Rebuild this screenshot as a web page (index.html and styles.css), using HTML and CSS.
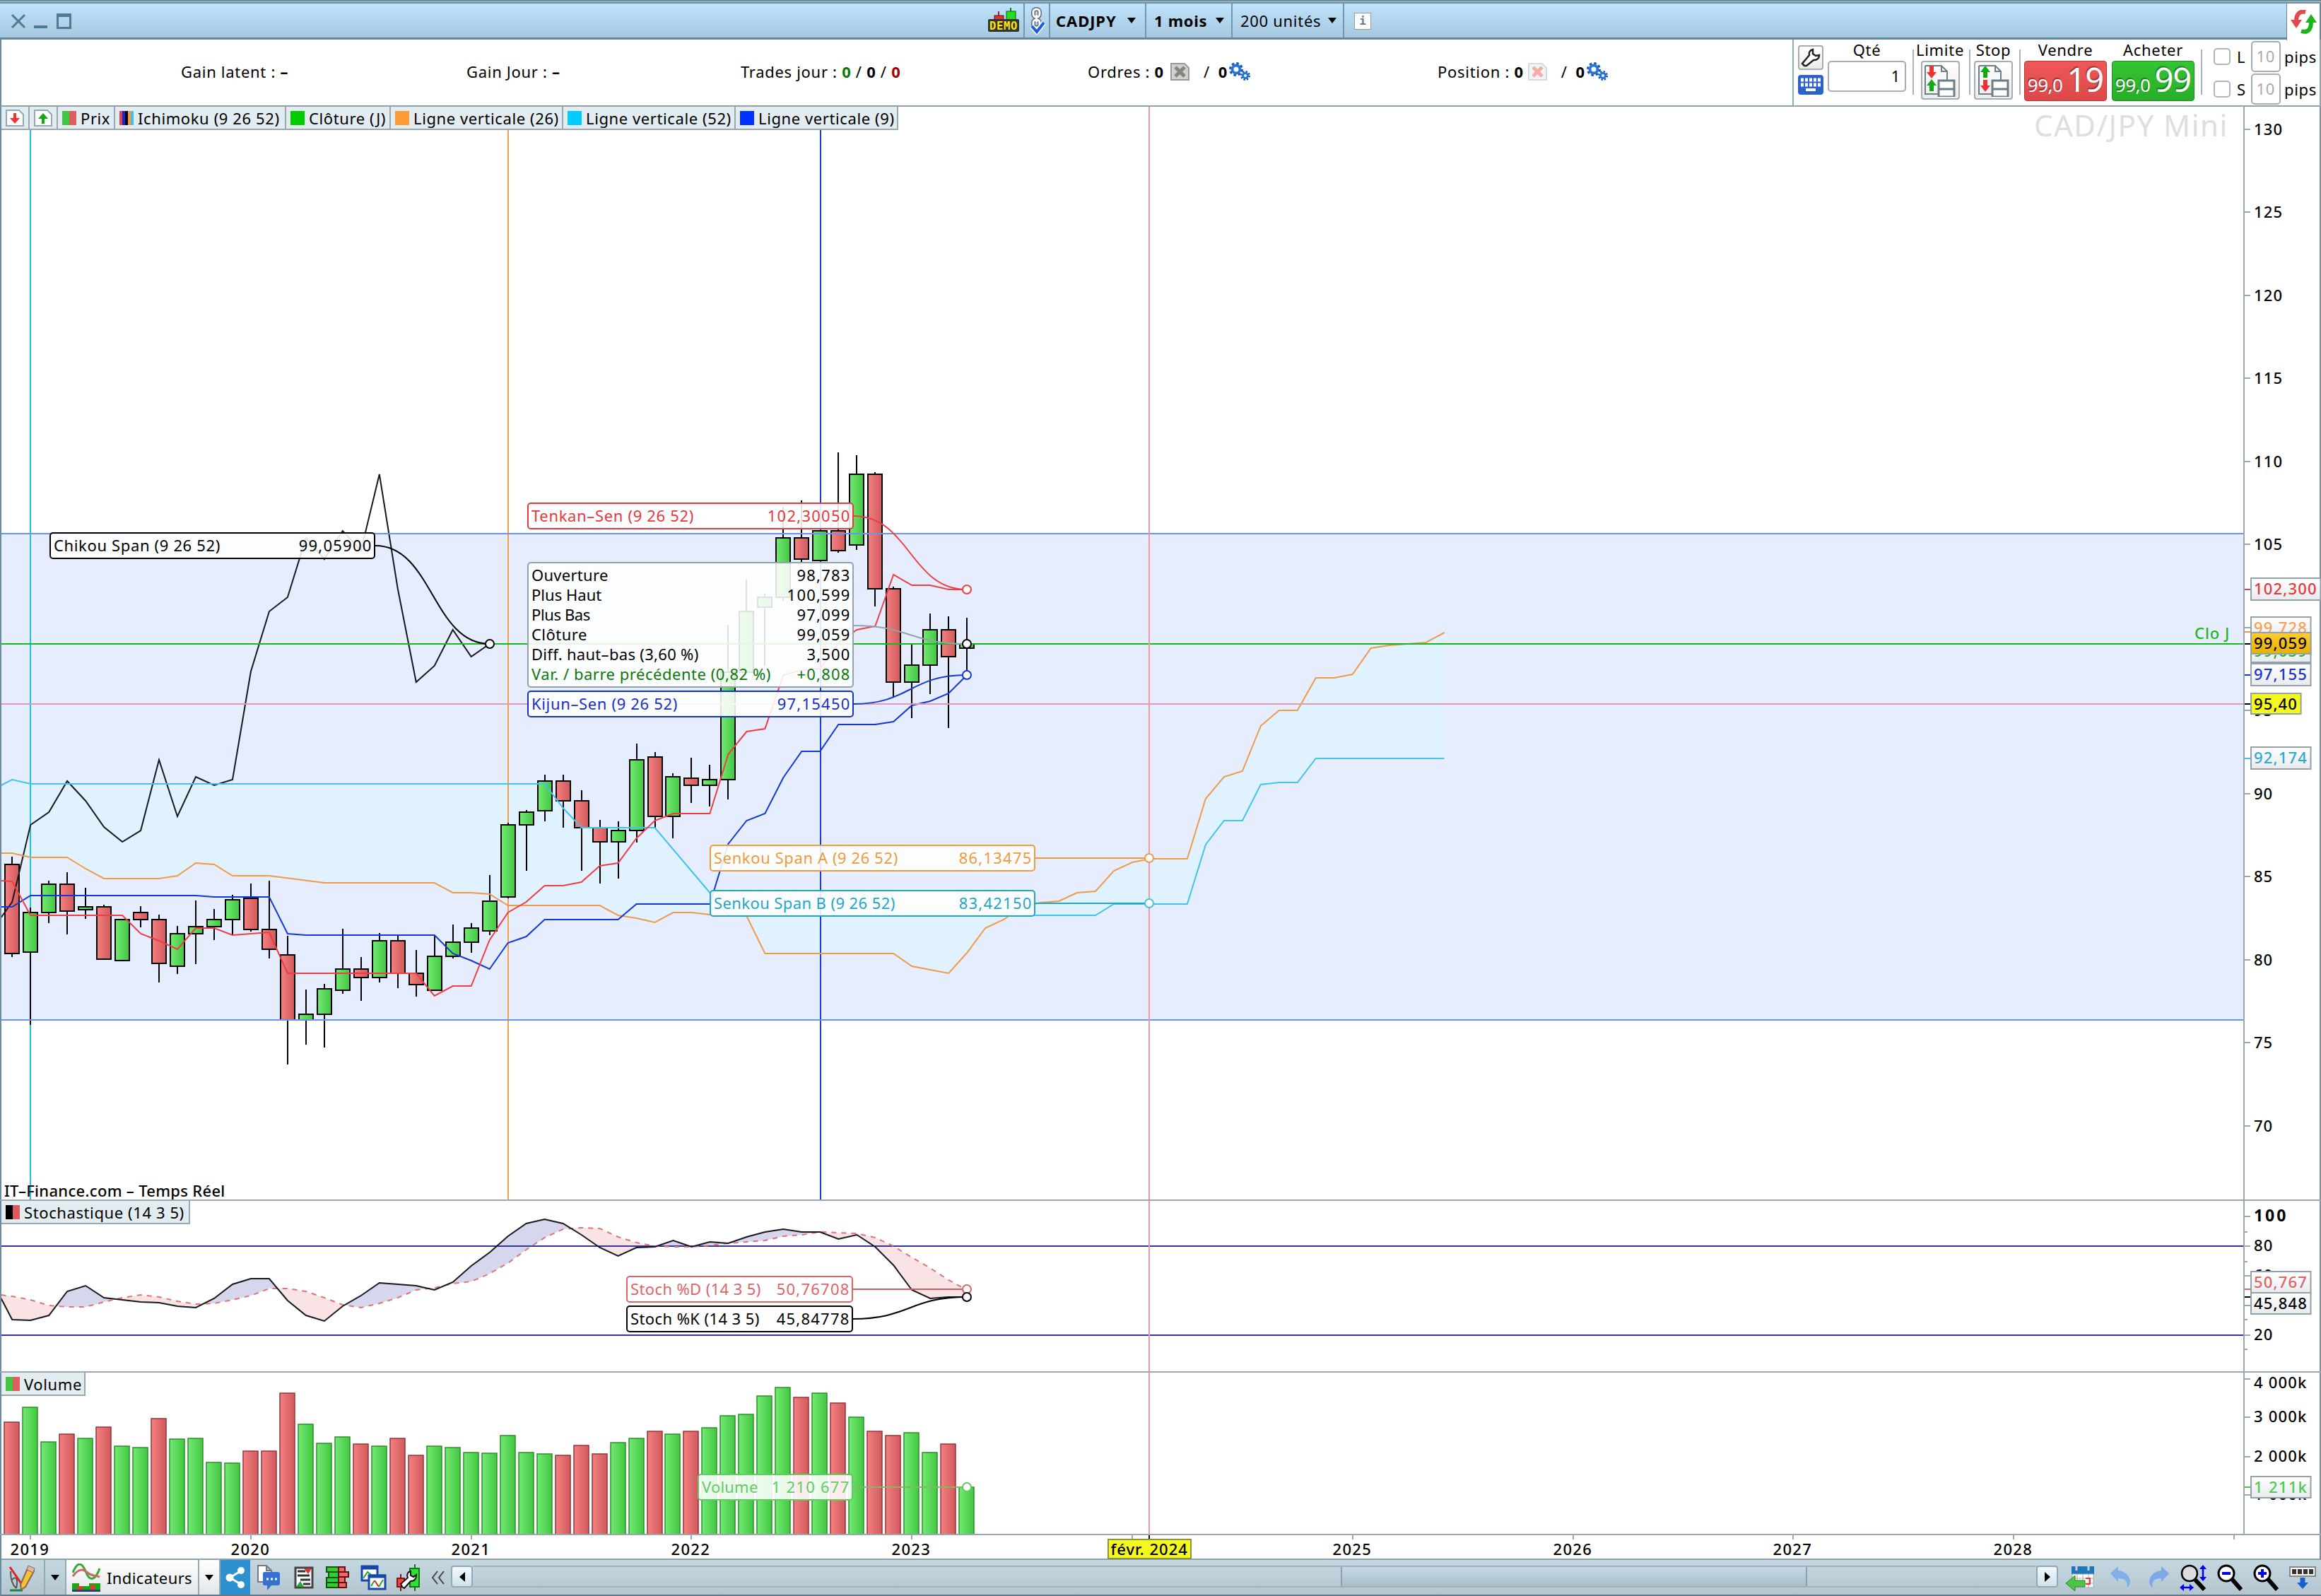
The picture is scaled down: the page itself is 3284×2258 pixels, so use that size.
FILE: index.html
```html
<!DOCTYPE html>
<html lang="fr">

<head>
    <meta charset="UTF-8">
    <title>CADJPY - 1 mois</title>
    <link rel="stylesheet" href="styles.css">
</head>

<body>
    <header class="titlebar">
        <div class="window-buttons">
            <svg width="104" height="24" viewBox="0 0 104 24" fill="none" stroke="#4f7a94" stroke-width="3">
                <path d="M2 3l18 18M20 3L2 21" />
                <path d="M33 20h19" stroke-width="4" />
                <path d="M66.500 2.500h18v19h-18z" />
                <path d="M65 4h21" stroke-width="4" />
            </svg>
        </div>
        <div class="title-group">
            <div class="title-item demo">
                <svg width="46" height="36" viewBox="0 0 46 36">
                    <path d="M16 5v8M33 0v8" stroke="#a22" stroke-width="2" />
                    <path d="M33 0v8" stroke="#080" stroke-width="2" />
                    <rect x="10" y="11" width="13" height="8" fill="#d33" stroke="#611" />
                    <rect x="27" y="5" width="13" height="14" fill="#2d2" stroke="#060" />
                    <rect x="1" y="16" width="44" height="18" rx="2" fill="#333" />
                    <text x="23" y="31" class="demo-text" text-anchor="middle" textLength="40" lengthAdjust="spacingAndGlyphs">DEMO</text>
                </svg>
            </div>
            <div class="title-item chain">
                <svg width="24" height="40" viewBox="0 0 24 40" fill="none">
                    <g stroke="#667" stroke-width="6"><rect x="6" y="4" width="9" height="11" rx="4" /><rect x="6" y="19" width="9" height="11" rx="4" /><path d="M10.500 12v10" /></g>
                    <g stroke="#fff" stroke-width="3"><rect x="6" y="4" width="9" height="11" rx="4" /><rect x="6" y="19" width="9" height="11" rx="4" /><path d="M10.500 12v10" /></g>
                    <path d="M4 28l7 8L21 23" stroke="#fff" stroke-width="7" />
                    <path d="M4 28l7 8L21 23" stroke="#1a5fe0" stroke-width="4" />
                </svg>
            </div>
            <div class="title-item symbol"><b>CADJPY</b><i class="caret"></i></div>
            <div class="title-item period"><b>1 mois</b><i class="caret"></i></div>
            <div class="title-item units"><span>200 unités</span><i class="caret"></i></div>
            <div class="info-button">i</div>
        </div>
        <div class="refresh">
            <svg width="38" height="34" viewBox="0 0 38 34" fill="none">
                <path d="M21 3C12 1 8 7 8 16" stroke="#e04a4a" stroke-width="6" />
                <path d="M0 14h16l-8 12z" fill="#e04a4a" />
                <path d="M15 30c10 3 14-3 14-13" stroke="#1db31d" stroke-width="6" />
                <path d="M21 18h16L29 6z" fill="#1db31d" />
            </svg>
        </div>
    </header>

    <section class="trading">
        <div class="stats">
            <div class="stat">Gain latent : <b>–</b></div>
            <div class="stat">Gain Jour : <b>–</b></div>
            <div class="stat">Trades jour : <b class="win">0</b> / <b>0</b> / <b class="loss">0</b></div>
            <div class="stat orders">Ordres : <b>0</b>
                <svg class="cancel" width="27" height="25" viewBox="0 0 27 25"><path d="M1 1h19l6 6v17H1z" fill="#d2d2cd" stroke="#999" stroke-width="2" /><path d="M7 6l13 13M20 6L7 19" stroke="#858585" stroke-width="5" /></svg>
                <span class="slash">/</span><b>0</b><svg class="gears" width="30" height="26" viewBox="0 0 30 26"><use href="#gears" /></svg>
            </div>
            <div class="stat">Position : <b>0</b>
                <svg class="cancel" width="27" height="25" viewBox="0 0 27 25"><path d="M1 1h19l6 6v17H1z" fill="#f2f5f8" stroke="#d0dbe2" stroke-width="2" /><path d="M7 6l13 13M20 6L7 19" stroke="#f9aaaa" stroke-width="5" /></svg>
                <span class="slash">/</span><b>0</b><svg class="gears" width="30" height="26" viewBox="0 0 30 26"><use href="#gears" /></svg>
            </div>
        </div>

        <div class="order">
            <div class="order-tools">
                <div class="tool-button">
                    <svg width="28" height="28" viewBox="0 0 28 28"><path d="M5 25l-3-3 10-12c-1-4 1-7 5-8v6l4 3 5-1c0 5-4 7-8 7L8 25z" fill="#fff" stroke="#222" stroke-width="2.500" /></svg>
                </div>
                <div class="keyboard">
                    <svg width="30" height="20" viewBox="0 0 30 20"><path d="M1 3h28M1 10h28" stroke="#fff" stroke-width="5" stroke-dasharray="4 2" /><path d="M8 17h14" stroke="#fff" stroke-width="4" /></svg>
                </div>
            </div>
            <div class="order-col qty"><label>Qté</label><div class="field">1</div></div>
            <div class="sep"></div>
            <div class="order-col limit"><label>Limite</label>
                <div class="square">
                    <svg width="46" height="46" viewBox="0 0 46 46"><path d="M2 2h23l8 8v12M2 2v40h19M25 2v8h8" fill="none" stroke="#6d7d87" stroke-width="2" /><path d="M11 2v10" stroke="#e33" stroke-width="6" /><path d="M4 11h14l-7 9z" fill="#e33" /><path d="M11 38V28" stroke="#1a1" stroke-width="6" /><path d="M4 30h14l-7-9z" fill="#1a1" /><path d="M21 23h22v23H21zM21 35h22" fill="#fff" stroke="#6d7d87" stroke-width="3" /></svg>
                </div>
            </div>
            <div class="sep"></div>
            <div class="order-col stop"><label>Stop</label>
                <div class="square">
                    <svg width="46" height="46" viewBox="0 0 46 46"><path d="M2 2h23l8 8v12M2 2v40h19M25 2v8h8" fill="none" stroke="#6d7d87" stroke-width="2" /><path d="M11 19V10" stroke="#1a1" stroke-width="6" /><path d="M4 11h14l-7-9z" fill="#1a1" /><path d="M11 22v9" stroke="#e33" stroke-width="6" /><path d="M4 30h14l-7 9z" fill="#e33" /><path d="M21 23h22v23H21zM21 35h22" fill="#fff" stroke="#6d7d87" stroke-width="3" /></svg>
                </div>
            </div>
            <div class="sep"></div>
            <div class="order-col price"><label>Vendre</label><div class="quote sell"><small>99,0</small>19</div></div>
            <div class="order-col price"><label>Acheter</label><div class="quote buy"><small>99,0</small>99</div></div>
            <div class="sep last"></div>
            <div class="pips">
                <div class="pips-row"><i class="check"></i><span class="pips-name">L</span><div class="pips-field">10</div>pips</div>
                <div class="pips-row"><i class="check"></i><span class="pips-name">S</span><div class="pips-field">10</div>pips</div>
            </div>
        </div>
    </section>

    <main class="charts">
        <section class="panel">
            <div class="legend main-legend">
                <div class="legend-icon"><svg width="26" height="24" viewBox="0 0 26 24"><path d="M1 1h18l6 6v16H1z" fill="#fff" stroke="#8fa9b8" stroke-width="2" /><path d="M13 5v9" stroke="#e33" stroke-width="4" /><path d="M6 12h14l-7 8z" fill="#e33" /></svg></div>
                <div class="legend-icon"><svg width="26" height="24" viewBox="0 0 26 24"><path d="M1 1h18l6 6v16H1z" fill="#fff" stroke="#8fa9b8" stroke-width="2" /><path d="M13 20v-9" stroke="#1a1" stroke-width="4" /><path d="M6 13h14l-7-8z" fill="#1a1" /></svg></div>
                <div class="legend-item"><i class="swatch price-swatch"></i>Prix</div>
                <div class="legend-item"><i class="swatch ichimoku"></i>Ichimoku (9 26 52)</div>
                <div class="legend-item"><i class="swatch close"></i>Clôture (J)</div>
                <div class="legend-item"><i class="swatch line26"></i>Ligne verticale (26)</div>
                <div class="legend-item"><i class="swatch line52"></i>Ligne verticale (52)</div>
                <div class="legend-item"><i class="swatch line9"></i>Ligne verticale (9)</div>
            </div>
            <svg id="price" width="3284" height="1546" viewBox="0 151 3284 1546"></svg>
        </section>
        <section class="panel">
            <div class="legend"><div class="legend-item stoch-legend"><i class="swatch stoch"></i>Stochastique (14 3 5)</div></div>
            <svg id="stoch" width="3284" height="241" viewBox="0 1699 3284 241"></svg>
        </section>
        <section class="panel">
            <div class="legend"><div class="legend-item volume-legend"><i class="swatch price-swatch"></i>Volume</div></div>
            <svg id="volume" width="3284" height="228" viewBox="0 1942 3284 228"></svg>
        </section>
        <svg id="dates" width="3284" height="35" viewBox="0 2172 3284 35"></svg>
    </main>

    <footer class="toolbar">
        <div class="tb tb-draw">
            <svg width="40" height="46" viewBox="0 -4 40 42" fill="none"><path d="M3 8c0 14 3 20 8 24M5 20c8-8 8 4 6 12" stroke="#555" stroke-width="2" /><path d="M2 2l18 26" stroke="#d22" stroke-width="3" /><path d="M2 35h18" stroke="#184" stroke-width="3" /><path d="M27 4l9 4-12 22-6 4-1-7z" fill="#f5c232" stroke="#865" stroke-width="2" /><path d="M28 0l9 4-2 6-9-4z" fill="#dcb8a0" stroke="#865" /></svg>
        </div>
        <div class="tb tb-caret"><i class="caret"></i></div>
        <div class="tb tb-indicators">
            <svg width="40" height="40" viewBox="0 0 40 40" fill="none"><path d="M1 13C8-4 14-2 20 13s14 8 19-6" stroke="#3a3" stroke-width="3" /><path d="M1 18C10 6 16 8 22 13s12 4 17 6" stroke="#c66" stroke-width="3" /><path d="M0 28h10v4h14v-4h16v10H0z" fill="#1a1" /><path d="M7 32h8v6H7zM26 30h6v8h-6z" fill="#e33" /><path d="M0 38.500h40" stroke="#247" stroke-width="3" /></svg>
            Indicateurs
        </div>
        <div class="tb tb-caret light"><i class="caret"></i></div>
        <div class="tb tb-share">
            <svg width="28" height="30" viewBox="0 0 28 30"><path d="M23 5L6 15l17 10" fill="none" stroke="#fff" stroke-width="3" /><circle cx="22" cy="5" r="5" fill="#fff" /><circle cx="6" cy="15" r="5.500" fill="#fff" /><circle cx="22" cy="25" r="5" fill="#fff" /></svg>
        </div>
        <div class="tb-icons">
            <svg class="chat" width="32" height="36" viewBox="0 0 32 36"><path d="M1 1h12l7 7v16H1zM13 1v7h7" fill="#fff" stroke="#778" stroke-width="2" /><path d="M10 10h19q3 0 3 3v13q0 3-3 3h-9l-6 7v-7h-4q-2 0-2-3V13q0-3 2-3z" fill="#3670d0" /><path d="M13 20h15" stroke="#fff" stroke-width="3" stroke-dasharray="3 3" /></svg>
            <svg class="report" width="28" height="32" viewBox="0 0 28 32"><path d="M2 2h24v28H2z" fill="#fff" stroke="#444" stroke-width="3" /><path d="M5 7h11M5 13h17M9 19h14M13 25h10" stroke="#333" stroke-width="3" /><path d="M14 3h11l-5 8z" fill="#d33" /><path d="M3 29l6-8 5 8z" fill="#2a3" /></svg>
            <svg class="book" width="34" height="34" viewBox="0 0 34 34"><path d="M1 2h17v7H1zM4 9h14v8H4zM1 17h17v7H1zM1 24h17v7H1z" fill="#3c3" stroke="#151" stroke-width="2" /><path d="M18 2h9v7h-9zM18 9h14v7H18zM18 16h9v8h-9zM18 24h11v7H18z" fill="#e66" stroke="#611" stroke-width="2" /></svg>
            <svg class="windows" width="38" height="36" viewBox="0 0 38 36"><path d="M2 2h22v20H2z" fill="#fff" stroke="#1748a8" stroke-width="3" /><path d="M1 4h24" stroke="#1748a8" stroke-width="5" /><path d="M4 19l6-9 5 4" fill="none" stroke="#2a2" stroke-width="2" /><path d="M12 15h23v19H12z" fill="#fff" stroke="#1748a8" stroke-width="3" /><path d="M11 16h25" stroke="#1748a8" stroke-width="5" /><path d="M15 30l5-8" stroke="#2a2" stroke-width="2" /><path d="M20 22l6 9" stroke="#d22" stroke-width="2" /><path d="M26 31l6-10" stroke="#2a2" stroke-width="2" /></svg>
            <svg class="setup" width="34" height="38" viewBox="0 0 34 38"><path d="M26 0v38" stroke="#171" stroke-width="2" /><path d="M19 6h13v26H19z" fill="#3d3" stroke="#171" stroke-width="2" /><path d="M6 14v24" stroke="#811" stroke-width="2" /><path d="M1 20h10v12H1z" fill="#e44" stroke="#811" stroke-width="2" /><path d="M8 32l-2-4 10-9c-2-5 0-8 4-9v6l4 2 4-3c0 7-4 9-8 9L11 34z" fill="#fff" stroke="#111" stroke-width="2" /></svg>
            <svg width="20" height="20" viewBox="0 0 20 20"><path d="M9 1L2 10l7 9M18 1l-7 9 7 9" fill="none" stroke="#444" stroke-width="2" /></svg>
        </div>
        <div class="scroll">
            <div class="scroll-button"><svg width="8" height="14" viewBox="0 0 8 14"><path d="M8 0v14L0 7z" /></svg></div>
            <div class="track"><div class="thumb"></div></div>
            <div class="scroll-button"><svg width="8" height="14" viewBox="0 0 8 14"><path d="M0 0v14l8-7z" /></svg></div>
        </div>
        <div class="tb-right">
            <svg width="40" height="38" viewBox="0 0 40 38"><path d="M8 3h32v11H8z" fill="#1c78b8" /><path d="M9 14h30v19H9z" fill="#fff" stroke="#aaa" /><path d="M16 14v19M24 14v19M32 14v19M9 20h30M9 27h30" stroke="#aaa" /><path d="M15 0v9M32 0v9" stroke="#ccd" stroke-width="3" /><path d="M28 20h6v8h-6" fill="none" stroke="#e33" stroke-width="2" /><path d="M0 27l13-11v7h14v9H13v6z" fill="#4cc444" stroke="#282" /></svg>
            <svg class="undo" width="30" height="32" viewBox="0 0 30 32"><path d="M0 10L11 0v6c14 1 23 16 12 25 3-10-3-14-12-14v5z" fill="#7fb0ea" /></svg>
            <svg class="redo" width="30" height="32" viewBox="0 0 30 32"><path d="M30 10L19 0v6C5 7-4 22 7 31c-3-10 3-14 12-14v5z" fill="#7fa8ea" /></svg>
            <svg width="38" height="38" viewBox="0 0 38 38"><path d="M22 22l13 14" stroke="#000" stroke-width="6" /><circle cx="14" cy="13" r="11" fill="#ddd" stroke="#000" stroke-width="2.500" /><path d="M33 5v14M6 33h10" stroke="#00e" stroke-width="2.500" /><path d="M28 7l5-6 5 6zM28 18l5 6 5-6zM6 28l-6 5 6 5zM14 28l6 5-6 5z" fill="#00e" /></svg>
            <svg width="36" height="38" viewBox="0 0 36 38"><path d="M20 20l14 16" stroke="#000" stroke-width="6" /><circle cx="13" cy="13" r="11" fill="#fff" stroke="#000" stroke-width="3" /><path d="M7 13h12" stroke="#00e" stroke-width="4" /></svg>
            <svg width="36" height="38" viewBox="0 0 36 38"><path d="M20 20l14 16" stroke="#000" stroke-width="6" /><circle cx="13" cy="13" r="11" fill="#fff" stroke="#000" stroke-width="3" /><path d="M7 13h12M13 7v12" stroke="#00e" stroke-width="4" /></svg>
            <svg width="38" height="34" viewBox="0 0 38 34"><path d="M1 2h36v13H1z" fill="#fff" stroke="#888" stroke-width="2" /><path d="M4 8.500h31" stroke="#333" stroke-width="7" stroke-dasharray="6 2" /><path d="M19 17v8" stroke="#1660d0" stroke-width="7" /><path d="M11 24h16l-8 9z" fill="#1660d0" /></svg>
        </div>
    </footer>

    <svg class="defs" width="0" height="0">
        <defs>
            <g id="gears" fill="none">
                <circle cx="10" cy="10" r="8" stroke="#1554b0" stroke-width="4" stroke-dasharray="3.300 3" />
                <circle cx="10" cy="10" r="5.500" stroke="#2a74d8" stroke-width="4" />
                <circle cx="23" cy="19" r="5.500" stroke="#1554b0" stroke-width="3" stroke-dasharray="2.300 2" />
                <circle cx="23" cy="19" r="3.500" stroke="#2a74d8" stroke-width="3" />
            </g>
            <linearGradient id="up"><stop offset="0" stop-color="#72ea72" /><stop offset="1" stop-color="#43c643" /></linearGradient>
            <linearGradient id="down"><stop offset="0" stop-color="#f58080" /><stop offset="1" stop-color="#d05a5c" /></linearGradient>
            <linearGradient id="tag" x2="0" y2="1"><stop offset="0" stop-color="#fff" /><stop offset="1" stop-color="#e8eaee" /></linearGradient>
            <linearGradient id="gold" x2="0" y2="1"><stop offset="0" stop-color="#ffcc33" /><stop offset="1" stop-color="#e8b000" /></linearGradient>
        </defs>
    </svg>
    <script src="script.js"></script>
</body>

</html>
```

FILE: styles.css
```css
* {
    box-sizing: border-box;
}

body {
    margin: 0;
    width: 3284px;
    height: 2258px;
    overflow: hidden;
    display: flex;
    flex-direction: column;
    background: #fff;
    color: #000;
    font-family: "Noto Sans", "Open Sans", sans-serif;
    font-size: 22px;
    letter-spacing: 0.7px;
}

svg {
    display: block;
    flex: none;
}

.defs {
    position: absolute;
}

/* title bar */
.titlebar {
    height: 56px;
    flex: none;
    display: flex;
    border-top: 5px double #6f8d9c;
    border-bottom: 3px solid #6389a1;
    background: linear-gradient(#bfe3fb, #a5c8df);
}

.window-buttons {
    width: 1397px;
    padding: 13px 0 0 15px;
}

.title-group {
    flex: 1;
    display: flex;
}

.title-item {
    display: flex;
    align-items: center;
    justify-content: space-between;
    border-right: 2px solid #6e98b2;
    padding: 0 10px 0 11px;
}

.demo {
    width: 53px;
    padding: 0;
}

.demo-text {
    font: bold 16px "DejaVu Sans Mono", monospace;
    fill: #ffe600;
}

.chain {
    width: 36px;
    padding: 0 0 0 6px;
}

.symbol {
    width: 136px;
    padding-left: 8px;
    padding-right: 13px;
    letter-spacing: 0.9px;
}

.period {
    width: 122px;
}

.units {
    width: 158px;
    padding-right: 9px;
}

.caret {
    border: 6px solid transparent;
    border-top: 8px solid #000;
    border-bottom: 0;
}

.info-button {
    width: 24px;
    height: 24px;
    margin: 13px 0 0 14px;
    background: #fff;
    border: 1px solid #999;
    color: #678;
    font: bold 16px/22px "DejaVu Sans Mono", monospace;
    text-align: center;
    letter-spacing: 0;
}

.refresh {
    width: 49px;
    height: 52px;
    padding: 9px 0 0 5px;
    background: #fff;
    border-left: 1px solid #6389a1;
    border-right: 2px solid #6389a1;
}

/* trading row */
.trading {
    height: 95px;
    flex: none;
    display: flex;
    border-bottom: 2px solid #8fa1aa;
    border-left: 2px solid #6d8ba0;
    border-right: 2px solid #8fa1aa;
}

.stats {
    width: 2534px;
    flex: none;
    display: grid;
    grid-template-columns: 404px 388px 491px 495px 1fr;
    padding: 0 0 3px 254px;
    align-items: center;
}

.stat {
    display: flex;
    align-items: center;
    height: 36px;
    white-space: pre;
}

.stat .win {
    color: #087808;
}

.stat .loss {
    color: #a00000;
}

.cancel {
    margin-left: 6px;
}

.orders .cancel {
    margin-left: 9px;
}

.slash {
    margin: 0 12px 0 20px;
}

.gears {
    margin-left: 2px;
}

.order {
    flex: 1;
    display: flex;
    border-left: 2px solid #8fa9b5;
    padding: 2px 0 0 6px;
}

.order-tools {
    width: 36px;
    flex: none;
    margin-right: 6px;
    padding-top: 6px;
}

.tool-button,
.square {
    display: flex;
    align-items: center;
    justify-content: center;
    border: 2px solid #a5adb2;
    border-radius: 4px;
    background: linear-gradient(#fff, #ececef);
}

.tool-button {
    height: 35px;
}

.keyboard {
    height: 28px;
    margin-top: 7px;
    border-radius: 4px;
    background: #2c63c8;
    display: flex;
    align-items: center;
    justify-content: center;
}

.order-col {
    display: flex;
    flex-direction: column;
    flex: none;
}

.order-col label {
    height: 28px;
    line-height: 24px;
    text-align: center;
    white-space: nowrap;
}

.qty {
    width: 111px;
}

.field,
.pips-field {
    height: 44px;
    border: 2px solid #a5adb2;
    border-radius: 5px;
    line-height: 39px;
    text-align: right;
    padding-right: 6px;
}

.sep {
    width: 2px;
    flex: none;
    height: 64px;
    margin: 12px 5px 0 9px;
    background: #a9b4ba;
}

.limit {
    width: 64px;
    align-items: center;
}

.stop {
    width: 55px;
    align-items: center;
}

.square {
    width: 55px;
    height: 55px;
}

.price {
    width: 117px;
}

.price + .price {
    margin-left: 7px;
}

.quote {
    height: 57px;
    border-radius: 4px;
    color: #fff;
    font-size: 47px;
    line-height: 50px;
    text-align: center;
    white-space: nowrap;
    letter-spacing: -1px;
    text-shadow: -1px -2px 1px rgba(0, 0, 0, 0.35);
}

.quote small {
    font-size: 26px;
    margin-right: 6px;
    letter-spacing: -0.5px;
}

.sell {
    background: linear-gradient(#f05858, #dc4848);
    border: 1px solid #b53636;
}

.buy {
    background: linear-gradient(#35c535, #27ae27);
    border: 1px solid #1d8b1d;
}

.last {
    margin-right: 0;
}

.pips {
    margin-left: 16px;
}

.pips-row {
    height: 44px;
    margin-bottom: 2px;
    display: flex;
    align-items: center;
}

.check {
    width: 24px;
    height: 24px;
    border: 2px solid #b0b7bb;
    border-radius: 5px;
}

.pips-name {
    width: 29px;
    padding-left: 9px;
}

.pips-field {
    width: 42px;
    margin-right: 5px;
    color: #aaa;
}

/* charts */
.charts {
    flex: none;
    height: 2056px;
    border-bottom: 2px solid #8fa1aa;
}

.panel {
    position: relative;
    border-bottom: 2px solid #98a8ae;
}

.legend {
    position: absolute;
    left: 2px;
    top: 0;
    display: flex;
    letter-spacing: 0.6px;
}

.legend-icon,
.legend-item {
    height: 33px;
    display: flex;
    align-items: center;
    background: #e2ecf1;
    border-right: 2px solid #98a8b0;
    border-bottom: 2px solid #98a8b0;
    white-space: nowrap;
}

.legend-icon {
    width: 40px;
    justify-content: center;
}

.legend-item {
    padding-left: 6px;
}

.main-legend .legend-item:nth-child(3) { width: 81px; }
.main-legend .legend-item:nth-child(4) { width: 242px; }
.main-legend .legend-item:nth-child(5) { width: 148px; }
.main-legend .legend-item:nth-child(6),
.main-legend .legend-item:nth-child(7) { width: 244px; }
.main-legend .legend-item:nth-child(8) { width: 230px; }

.stoch-legend {
    width: 267px;
}

.volume-legend {
    width: 119px;
}

.swatch {
    width: 20px;
    height: 20px;
    margin-right: 6px;
}

.price-swatch { background: linear-gradient(90deg, #43c443 50%, #dd6060 50%); }
.ichimoku { background: linear-gradient(90deg, #f03b4b 20%, #0a2ae0 20% 40%, #000 40% 60%, #ff9a3c 60% 80%, #35c4f5 80%); }
.close { background: #00cc00; }
.line26 { background: #ff9933; }
.line52 { background: #00ccff; }
.line9 { background: #0033ff; }
.stoch { background: linear-gradient(90deg, #000 50%, #dd5a5a 50%); }

.series {
    fill: none;
    stroke-width: 2;
}

.axis {
    font-weight: 500;
}

.bold {
    font-weight: 700;
    font-size: 23px;
}

.watermark {
    font-size: 42px;
    fill: #dedede;
}

/* bottom toolbar */
.toolbar {
    flex: 1;
    display: flex;
    background: linear-gradient(#c5d8e2, #b4c5ce);
    border-bottom: 2px solid #61798a;
    border-left: 2px solid #6d8ba0;
}

.tb {
    display: flex;
    align-items: center;
    justify-content: center;
    border-right: 2px solid #97a9b3;
}

.tb-draw {
    width: 62px;
}

.tb-caret {
    width: 30px;
}

.tb-indicators {
    width: 188px;
    gap: 9px;
    letter-spacing: 0.4px;
    background: linear-gradient(#fff, #e2e6e9);
}

.light {
    background: linear-gradient(#fff, #e2e6e9);
}

.tb-share {
    width: 42px;
    background: #2d90d0;
    border: 0;
}

.tb-icons {
    width: 267px;
    margin-left: 10px;
    display: flex;
    align-items: center;
}

.chat {
    margin-right: 20px;
}

.report {
    margin-right: 17px;
}

.book {
    margin-right: 15px;
}

.windows {
    margin-right: 13px;
}

.setup {
    margin-right: 15px;
}

.scroll {
    flex: 1;
    margin-left: 7px;
    height: 31px;
    align-self: center;
    display: flex;
    margin-bottom: 2px;
}

.scroll-button {
    width: 31px;
    border: 2px solid #91a9b5;
    border-radius: 4px;
    background: linear-gradient(#f4fafd, #cfe1eb);
    display: flex;
    align-items: center;
    justify-content: center;
}

.track {
    flex: 1;
    border: solid #9fb4bf;
    border-width: 2px 0;
    padding-left: 1228px;
}

.thumb {
    width: 660px;
    height: 27px;
    border: solid #8ba3b0;
    border-width: 0 2px;
    background: linear-gradient(#c5dae5, #a7bdc9);
}

.tb-right {
    width: 356px;
    margin: 0 5px 0 11px;
    display: flex;
    align-items: center;
    gap: 15px;
}

.undo,
.redo {
    margin-left: 8px;
}
```

FILE: script.js
```js
const RED = '#f03c42', BLUE = '#1238d8', ORANGE = '#f09a48', CYAN = '#41c3ee';
const AXIS_X = 3175;

const barX = i => 17.2 + i * 25.98;
const fmt = n => n.toFixed(1);

// direction, body top, body bottom, high, low
const candles = [
    ['d', 1223, 1349, 1212, 1354], ['u', 1291, 1347, 1284, 1450], ['u', 1251, 1291, 1246, 1306], ['d', 1251, 1289, 1234, 1322],
    ['u', 1283, 1287, 1256, 1300], ['d', 1283, 1357, 1280, 1357], ['u', 1301, 1359, 1301, 1359], ['d', 1291, 1301, 1282, 1312],
    ['d', 1301, 1363, 1294, 1390], ['u', 1321, 1367, 1310, 1378], ['u', 1311, 1321, 1274, 1364], ['u', 1301, 1311, 1286, 1330],
    ['u', 1273, 1301, 1266, 1323], ['d', 1271, 1315, 1250, 1318], ['d', 1315, 1343, 1246, 1356], ['d', 1351, 1443, 1324, 1506],
    ['u', 1435, 1443, 1400, 1478], ['u', 1399, 1435, 1392, 1482], ['u', 1371, 1401, 1314, 1406], ['d', 1371, 1383, 1354, 1416],
    ['u', 1331, 1383, 1320, 1390], ['d', 1331, 1377, 1324, 1398], ['d', 1377, 1393, 1344, 1410], ['u', 1353, 1401, 1323, 1401],
    ['u', 1333, 1353, 1308, 1356], ['u', 1313, 1333, 1306, 1348], ['u', 1275, 1317, 1238, 1323], ['u', 1167, 1269, 1164, 1271],
    ['u', 1149, 1167, 1146, 1232], ['u', 1105, 1147, 1096, 1162], ['d', 1105, 1133, 1096, 1171], ['d', 1133, 1171, 1118, 1232],
    ['d', 1171, 1191, 1160, 1250], ['u', 1175, 1191, 1162, 1243], ['u', 1075, 1175, 1052, 1192], ['d', 1071, 1155, 1064, 1171],
    ['u', 1099, 1155, 1094, 1186], ['d', 1101, 1111, 1072, 1136], ['u', 1103, 1111, 1082, 1141], ['u', 951, 1103, 884, 1131],
    ['u', 865, 951, 819, 951], ['u', 845, 859, 840, 942], ['u', 761, 845, 717, 850], ['d', 761, 791, 708, 795],
    ['u', 751, 793, 750, 793], ['d', 751, 779, 640, 782], ['u', 671, 771, 644, 778], ['d', 671, 833, 668, 858],
    ['d', 833, 965, 830, 987], ['u', 941, 965, 912, 1016], ['u', 891, 941, 868, 982], ['d', 891, 929, 872, 1030],
    ['u', 911, 917, 874, 950]
];

// [bar index, y]
const tenkan = [[-.6, 1246], [0, 1247], [1, 1295], [6, 1295], [7, 1321], [8, 1331], [9, 1343], [10, 1313], [11, 1313], [12, 1323], [14, 1319], [15, 1377], [22, 1377], [23, 1409], [24, 1395], [25, 1395], [26, 1330], [27, 1291], [28, 1276], [29, 1253], [30, 1253], [31, 1248], [32, 1225], [33, 1221], [34, 1186], [35, 1161], [36, 1151], [38, 1151], [39, 1067], [40, 1035], [41, 1031], [42, 955], [43, 948], [44, 946], [45, 910], [46, 891], [47, 886], [48, 813], [49, 828], [50, 828], [51, 834], [52, 834]];
const kijun = [[-.6, 1283], [0, 1283], [1, 1267], [10, 1267], [11, 1269], [14, 1269], [15, 1321], [16, 1323], [23, 1323], [24, 1349], [25, 1359], [26, 1371], [27, 1334], [28, 1325], [29, 1301], [33, 1301], [34, 1279], [38, 1279], [39, 1194], [40, 1161], [41, 1151], [42, 1100], [43, 1063], [44, 1063], [45, 1025], [47, 1025], [48, 1021], [49, 998], [50, 992], [51, 981], [52, 955]];
const spanA = [[-.6, 1207], [0, 1207], [1, 1213], [3, 1213], [4, 1229], [5, 1243], [8, 1243], [9, 1239], [10, 1221], [11, 1223], [12, 1239], [14, 1239], [17, 1249], [23, 1249], [24, 1263], [25, 1263], [26, 1265], [27, 1281], [32, 1281], [33, 1295], [34, 1299], [35, 1305], [36, 1291], [37, 1291], [38, 1294], [40, 1296], [41, 1349], [48, 1349], [49, 1367], [50, 1372], [51, 1377], [52, 1348], [53, 1313], [54, 1301], [55, 1283], [56, 1277], [57, 1275], [58, 1263], [59, 1261], [60, 1232], [61, 1220], [62, 1215], [64, 1215], [65, 1130], [66, 1099], [67, 1091], [68, 1027], [69, 1005], [70, 1005], [71, 959], [72, 959], [73, 954], [74, 917], [75, 913], [76, 911], [77, 909], [78, 895]];
const spanB = [[-.6, 1111], [0, 1103], [1, 1109], [29, 1109], [30, 1143], [31, 1171], [35, 1171], [38, 1263], [39, 1295], [59, 1295], [60, 1279], [64, 1279], [65, 1195], [66, 1161], [67, 1161], [68, 1110], [69, 1107], [70, 1107], [71, 1073], [78, 1073]];
const chikou = [[-.6, 1298], [0, 1276], [1, 1167], [2, 1149], [3, 1105], [4, 1133], [5, 1170], [6, 1191], [7, 1175], [8, 1075], [9, 1155], [10, 1099], [11, 1111], [12, 1103], [13, 950], [14, 865], [15, 845], [16, 761], [17, 791], [18, 751], [19, 779], [20, 671], [21, 833], [22, 965], [23, 942], [24, 891], [25, 929], [26, 911]];

const stochK = [1867, 1868, 1861, 1827, 1819, 1836, 1839, 1842, 1843, 1848, 1850, 1837, 1817, 1809, 1809, 1840, 1861, 1869, 1848, 1833, 1815, 1817, 1819, 1825, 1814, 1791, 1772, 1749, 1731, 1725, 1731, 1747, 1765, 1777, 1765, 1764, 1755, 1764, 1757, 1759, 1750, 1743, 1739, 1743, 1743, 1753, 1747, 1764, 1790, 1825, 1837, 1835, 1835];
const stochD = [1834, 1839, 1847, 1849, 1849, 1842, 1836, 1832, 1835, 1841, 1845, 1844, 1839, 1833, 1823, 1823, 1827, 1836, 1846, 1850, 1844, 1836, 1825, 1822, 1816, 1813, 1802, 1787, 1768, 1751, 1739, 1737, 1738, 1750, 1758, 1763, 1764, 1764, 1762, 1759, 1757, 1755, 1749, 1747, 1743, 1744, 1745, 1751, 1763, 1779, 1794, 1811, 1825];

const volumes = [2012, 1991, 2040, 2029, 2035, 2019, 2046, 2048, 2007, 2036, 2035, 2069, 2070, 2053, 2053, 1971, 2015, 2042, 2033, 2043, 2046, 2035, 2059, 2046, 2048, 2055, 2056, 2031, 2055, 2057, 2059, 2045, 2057, 2041, 2035, 2025, 2029, 2025, 2020, 2003, 2001, 1975, 1963, 1977, 1971, 1985, 2005, 2025, 2031, 2027, 2055, 2043, 2104];
const volumeDown = [0, 3, 5, 8, 13, 14, 15, 19, 21, 22, 30, 31, 32, 35, 37, 43, 45, 47, 48, 51];

function line(x1, y1, x2, y2, color, width = 2) {
    return `<line x1="${x1}" y1="${y1}" x2="${x2}" y2="${y2}" stroke="${color}" stroke-width="${width}"/>`;
}

function points(list) {
    return list.map(([i, y]) => `${fmt(barX(i))},${y}`).join(' ');
}

function series(list, color, extra = '') {
    return `<polyline class="series" points="${points(list)}" stroke="${color}" ${extra}/>`;
}

// figures share one advance width, separators are half of it
function numberWidth(s) {
    return [...s].reduce((w, c) => w + (/[\d+k]/.test(c) ? 13.9 : 7), 0) - 1;
}

function text(x, y, s, color = '#000', width = 0, anchor = 'start', cls = '') {
    const fit = width ? ` textLength="${fmt(width)}"` : '';
    return `<text x="${x}" y="${y}" fill="${color}" text-anchor="${anchor}" class="${cls}"${fit}>${s}</text>`;
}

function callout(x, y, w, h, border, rows) {
    let out = `<rect x="${x + 1}" y="${y + 1}" width="${w - 2}" height="${h - 2}" rx="4" fill="#fff" fill-opacity=".88" stroke="${border}" stroke-width="2"/>`;
    rows.forEach(([label, value, width, color], n) => {
        const base = y + 27 + n * 28;
        out += text(x + 6, base, label, color || border, width);
        out += text(x + w - 5, base, value, color || border, numberWidth(value), 'end');
    });
    return out;
}

function link(x1, y1, x2, y2, color) {
    const mid = (x1 + x2) / 2;
    return `<path class="series" d="M${x1} ${y1}C${mid} ${y1} ${mid} ${y2} ${x2} ${y2}" stroke="${color}"/>`;
}

function dot(x, y, color) {
    return `<circle cx="${x}" cy="${y}" r="6" fill="#fff" stroke="${color}" stroke-width="2"/>`;
}

function tag(x, y, s, color, { fill = 'url(#tag)', border = '#93a1a8', h = 31, cls = 'axis' } = {}) {
    const w = numberWidth(s) + 9;
    return `<rect x="${x}" y="${y}" width="${fmt(w)}" height="${h}" fill="${fill}" stroke="${border}" stroke-width="2"/>` +
        text(x + 4, y + 23, s, color, numberWidth(s), 'start', cls);
}

function frame(top, bottom) {
    return line(1, top, 1, bottom, '#6d8ba0') + line(AXIS_X, top, AXIS_X, bottom, '#98a8ae') + line(3283, top, 3283, bottom, '#7c8f98');
}

function tick(y, color = '#98a8ae', length = 8) {
    return line(AXIS_X + 1, y, AXIS_X + 1 + length, y, color);
}

function drawPrice() {
    let s = `<rect x="2" y="755" width="${AXIS_X - 2}" height="688" fill="#e6edfe"/>`;
    s += `<polygon points="${points(spanA)} ${points([...spanB].reverse())}" fill="#e0f1ff"/>`;
    s += line(43, 151, 43, 1697, '#22bfe0') + line(719, 151, 719, 1697, '#eda050') + line(1161, 151, 1161, 1697, '#1a3fc8');

    candles.forEach(([dir, top, bottom, high, low], i) => {
        const x = Math.round(barX(i));
        s += line(x, high, x, low, '#000');
        s += `<rect x="${x - 10}" y="${top}" width="20" height="${bottom - top}" fill="url(#${dir === 'u' ? 'up' : 'down'})" stroke="#000" stroke-width="2"/>`;
    });

    s += series(chikou, '#16181c') + series(spanA, ORANGE) + series(spanB, CYAN) + series(kijun, BLUE) + series(tenkan, RED);
    s += line(2, 755, AXIS_X, 755, '#6b95ea') + line(2, 1443, AXIS_X, 1443, '#6b95ea');
    s += line(2, 911, AXIS_X, 911, '#18b918');
    s += line(2, 996, AXIS_X, 996, '#e39ab0') + line(1626, 151, 1626, 1697, '#ee9aa2');

    s += link(1207, 730, 1368, 834, RED) + link(1207, 885, 1368, 911, '#93a2ab') + link(1207, 996, 1368, 955, BLUE) + link(531, 772, 693, 911, '#000');
    s += line(1464, 1214, 1626, 1214, '#f09a3c') + line(1464, 1278, 1626, 1278, '#20a6c8');
    s += dot(1368, 834, RED) + dot(1368, 911, '#000') + dot(1368, 955, BLUE) + dot(693, 911, '#000') + dot(1626, 1214, ORANGE) + dot(1626, 1278, CYAN);

    s += callout(70, 753, 461, 38, '#000', [['Chikou Span (9 26 52)', '99,05900', 236]]);
    s += callout(746, 711, 462, 38, '#e8383c', [['Tenkan–Sen (9 26 52)', '102,30050', 230]]);
    s += callout(746, 795, 462, 178, '#93a2ab', [
        ['Ouverture', '98,783', 109, '#000'],
        ['Plus Haut', '100,599', 100, '#000'],
        ['Plus Bas', '97,099', 84, '#000'],
        ['Clôture', '99,059', 79, '#000'],
        ['Diff. haut–bas (3,60 %)', '3,500', 237, '#000'],
        ['Var. / barre précédente (0,82 %)', '+0,808', 339, '#0a780a']
    ]);
    s += callout(746, 977, 462, 38, '#1432c8', [['Kijun–Sen (9 26 52)', '97,15450', 207]]);
    s += callout(1004, 1195, 461, 38, '#f09a3c', [['Senkou Span A (9 26 52)', '86,13475', 261]]);
    s += callout(1004, 1259, 461, 38, '#20a6c8', [['Senkou Span B (9 26 52)', '83,42150', 257]]);

    s += text(3152, 193, 'CAD/JPY Mini', '#dedede', 274, 'end', 'watermark');
    s += text(3155, 904, 'Clo J', '#20b420', 50, 'end', 'axis');
    s += text(6, 1693, 'IT–Finance.com – Temps Réel', '#000', 313, 'start', 'axis');

    s += frame(151, 1697);
    for (let p = 70; p <= 130; p += 5) {
        const y = Math.round(911 - (p - 99.059) * 23.5);
        s += tick(y - 1);
        if (p !== 100) s += text(3189, y + 7, p, '#000', numberWidth(String(p)), 'start', 'axis');
    }
    s += tick(834, RED) + tick(894, ORANGE) + tick(911, '#000', 9) + tick(955, BLUE) + tick(996, '#000', 9) + tick(1073, CYAN);
    s += tag(3185, 818, '102,300', '#e8383c');
    s += tag(3185, 873, '99,728', '#f5a050');
    s += tag(3185, 906, '99,059', '#20b420');
    s += tag(3185, 895, '99,059', '#000', { fill: 'url(#gold)', h: 30 });
    s += tag(3185, 939, '97,155', '#1432c8');
    s += tag(3185, 981, '95,40', '#000', { fill: '#f5f81e', h: 29 });
    s += tag(3185, 1057, '92,174', '#2fa8cc');
    document.getElementById('price').innerHTML = s;
}

function drawStoch() {
    const k = stochK.map((y, i) => [i, y]);
    const d = stochD.map((y, i) => [i, y]);
    k.unshift([-.6, 1837]);
    d.unshift([-.6, 1832]);

    // split the area between both curves at each crossing
    let above = '', below = '';
    for (let n = 1; n < k.length; n++) {
        const [i0, k0] = k[n - 1], [i1, k1] = k[n];
        const d0 = d[n - 1][1], d1 = d[n][1];
        const g0 = d0 - k0, g1 = d1 - k1;
        const part = (a, ka, da, b, kb, db) => `M${barX(a)} ${ka}L${barX(b)} ${kb}V${db}L${barX(a)} ${da}Z`;
        if (g0 * g1 < 0) {
            const t = g0 / (g0 - g1), im = i0 + (i1 - i0) * t, ym = k0 + (k1 - k0) * t;
            const first = part(i0, k0, d0, im, ym, ym), second = part(im, ym, ym, i1, k1, d1);
            above += g0 > 0 ? first : second;
            below += g0 > 0 ? second : first;
        } else if (g0 + g1 > 0) {
            above += part(i0, k0, d0, i1, k1, d1);
        } else {
            below += part(i0, k0, d0, i1, k1, d1);
        }
    }

    let s = `<path d="${above}" fill="#d6d6ec"/><path d="${below}" fill="#fae3e4"/>`;
    s += line(2, 1763, AXIS_X, 1763, '#3434a0') + line(2, 1889, AXIS_X, 1889, '#3434a0');
    s += series(d, '#dc7478', 'stroke-dasharray="7 7"') + series(k, '#16181c');
    s += line(1626, 1699, 1626, 1940, '#ee9aa2');
    s += line(1206, 1824, 1368, 1824, '#d05c60') + link(1206, 1866, 1368, 1835, '#000');
    s += dot(1368, 1824, '#dc6468') + dot(1368, 1835, '#000');
    s += callout(886, 1805, 321, 38, '#dc6468', [['Stoch %D (14 3 5)', '50,76708', 185]]);
    s += callout(886, 1847, 321, 38, '#000', [['Stoch %K (14 3 5)', '45,84778', 183]]);
    s += frame(1699, 1940);
    [1721, 1763, 1805, 1847, 1889].forEach(y => s += tick(y));
    [1743, 1785, 1867, 1909].forEach(y => s += tick(y, '#98a8ae', 4));
    s += text(3189, 1728, '100', '#000', 46, 'start', 'bold');
    s += text(3189, 1770, '80', '#000', 27, 'start', 'axis') + text(3189, 1812, '60', '#000', 27, 'start', 'axis') + text(3189, 1896, '20', '#000', 27, 'start', 'axis');
    s += tick(1824, '#dc6468') + tick(1835, '#000');
    s += tag(3185, 1799, '50,767', '#dc6468') + tag(3185, 1829, '45,848', '#000', { h: 30 });
    document.getElementById('stoch').innerHTML = s;
}

function drawVolume() {
    let s = '';
    volumes.forEach((y, i) => {
        const down = volumeDown.includes(i);
        const x = Math.round(barX(i));
        const edge = down ? '#963438' : '#2a902a';
        s += `<rect x="${x - 11}" y="${y}" width="21" height="${2172 - y}" fill="url(#${down ? 'down' : 'up'})" stroke="${edge}" stroke-width="1.5"/>`;
    });
    s += line(1626, 1942, 1626, 2170, '#ee9aa2');
    s += line(1206, 2104, 1368, 2104, '#80b868') + dot(1368, 2104, '#60cc60');
    s += callout(987, 2085, 220, 38, '#60cc60', [['Volume', '1 210 677', 80]]);
    s += frame(1942, 2170);
    [[1951, 1964, '4 000k'], [2005, 2012, '3 000k'], [2061, 2068, '2 000k'], [2115, 2122, '1 000k']].forEach(([ty, y, label]) => {
        s += tick(ty) + text(3189, y, label, '#000', 75, 'start', 'axis');
    });
    s += tick(2104, '#50c850') + tag(3185, 2089, '1 211k', '#50c850', { h: 30 });
    document.getElementById('volume').innerHTML = s;
}

function drawDates() {
    let s = line(1, 2172, 1, 2208, '#6d8ba0') + line(3283, 2172, 3283, 2208, '#7c8f98');
    for (let n = 0; n <= 10; n++) {
        const x = Math.round(barX(1 + n * 12));
        s += line(x, 2172, x, 2178, '#98a8ae');
        if (n !== 5 && n < 10) s += text(x - 1, 2200, 2019 + n, '#000', 55, 'middle', 'axis');
    }
    s += line(1602, 2172, 1602, 2178, '#98a8ae') + line(1626, 2170, 1626, 2178, '#000');
    s += '<rect x="1568" y="2178" width="117" height="27" fill="#f5f81e" stroke="#8a9440" stroke-width="2"/>';
    s += text(1626, 2200, 'févr. 2024', '#000', 109, 'middle', 'axis');
    document.getElementById('dates').innerHTML = s;
}

drawPrice();
drawStoch();
drawVolume();
drawDates();
```
